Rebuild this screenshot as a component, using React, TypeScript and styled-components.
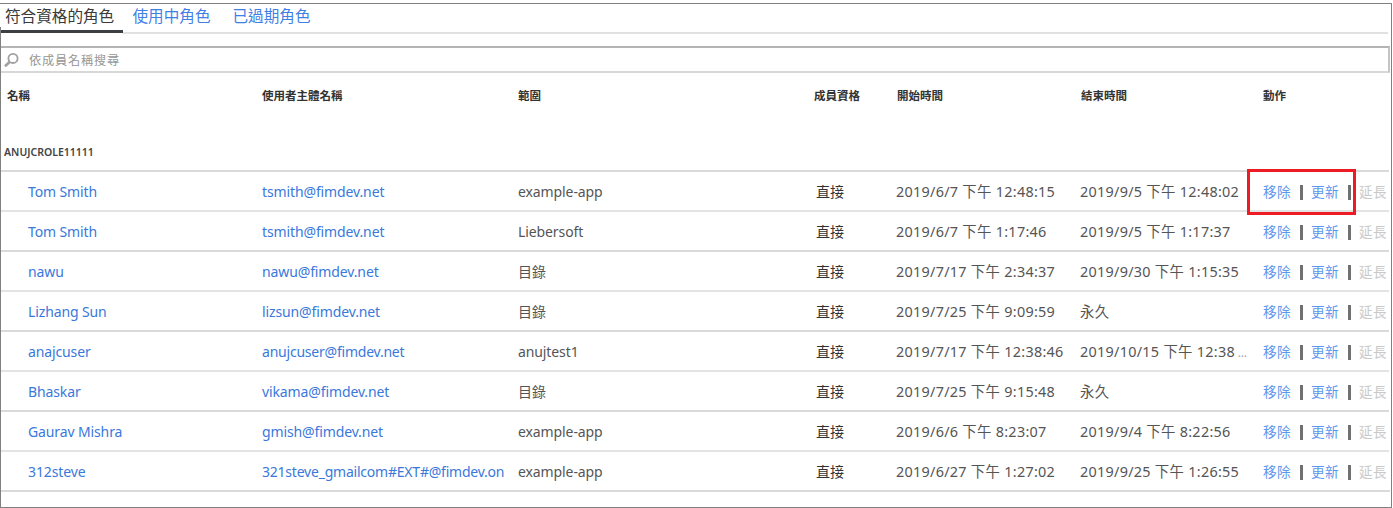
import React from "react";
import styled, { createGlobalStyle } from "styled-components";

const GlobalStyle = createGlobalStyle`
  *, *::before, *::after { box-sizing: border-box; }
  body {
    margin: 0;
    background: #fff;
    font-family: "Noto Sans", "Noto Sans CJK TC", sans-serif;
  }
`;

const Page = styled.main`
  width: 1393px;
  height: 508px;
  padding: 3px 1px 0 0;
  overflow: hidden;
  background: #fff;
`;

const Frame = styled.div`
  display: flex;
  flex-direction: column;
  height: 505px;
  border: 1px solid #808080;
  border-left: 0;
`;

const Tabs = styled.nav`
  display: flex;
  height: 28px;
  padding-right: 2px;
  align-items: stretch;
`;

const Tab = styled.a<{ $active?: boolean; $width: number; $indent: number }>`
  flex: none;
  width: ${(p) => p.$width}px;
  padding-left: ${(p) => p.$indent}px;
  font-size: 15.6px;
  line-height: 25px;
  white-space: nowrap;
  color: ${(p) => (p.$active ? "#3a3a3a" : "#3f80e4")};
  height: ${(p) => (p.$active ? 29 : 25)}px;
  border-bottom: ${(p) => (p.$active ? "3px solid #3d4042" : "0")};
`;

const TabRule = styled.div`
  flex: none;
  height: 2px;
  margin: 0 3px 0 123px;
  background: #e1e1e1;
`;

const Body = styled.section`
  display: flex;
  flex: 1;
  flex-direction: column;
  margin-top: -7px;
  padding-top: 19px;
  border-left: 1px solid #808080;
`;

const SearchBox = styled.label`
  display: flex;
  flex: none;
  align-items: center;
  height: 27px;
  width: 1389px;
  padding: 0 0 0 3px;
  gap: 10px;
  border: 2px solid #d8d8d8;
  border-top: 2px solid #b4b4b4;
  border-right-color: #c4c4c4;
  border-left: 0;
  color: #969696;
  font-size: 12.2px;
  letter-spacing: 0.8px;
`;

const Grid = styled.div`
  display: grid;
  grid-template-columns: 255px 256px 296px 83px 184px 182px 1fr;
  padding-left: 6px;
`;

const HeadRow = styled(Grid)`
  flex: none;
  height: 44px;
  align-items: center;
  font-size: 11.5px;
  font-weight: 600;
  color: #333;
`;

const GroupName = styled.h2`
  flex: none;
  height: 53px;
  margin: 0;
  padding: 25px 0 0 3px;
  font-size: 10.5px;
  font-weight: 600;
  line-height: 20px;
  color: #444;
`;

const Row = styled(Grid)<{ $heavy: boolean }>`
  flex: none;
  height: 40px;
  margin-right: 1px;
  padding-left: 27px;
  grid-template-columns: 234px 256px 298px 80px 184px 183px 1fr;
  align-items: center;
  border-top: 2px solid ${(p) => (p.$heavy ? "#dadada" : "#e3e3e3")};
  font-size: 14px;
  color: #555;
`;

const Rows = styled.div`
  border-bottom: 2px solid #dadada;
  margin-right: 1px;
`;

const Cell = styled.span`
  white-space: nowrap;
  letter-spacing: -0.1px;
`;

const LinkCell = styled(Cell)<{ $tight?: boolean }>`
  color: #3a78db;
  letter-spacing: ${(p) => (p.$tight ? -0.22 : -0.12)}px;
`;

const DateCell = styled(Cell)`
  padding-bottom: 2px;
  font-size: 14.4px;
  letter-spacing: 0.28px;
`;

const Membership = styled(Cell)`
  color: #333;
`;

const Ellipsis = styled.span`
  margin-left: 3px;
  font-size: 10px;
  font-weight: 600;
  color: #aaa;
`;

const Actions = styled.div`
  position: relative;
  display: flex;
  align-items: center;
  font-size: 13.6px;
  letter-spacing: 0.3px;
  white-space: nowrap;
`;

const Action = styled.a<{ $disabled?: boolean }>`
  width: 28px;
  color: ${(p) => (p.$disabled ? "#c9c9c9" : "#5d97ec")};
`;

const Divider = styled.i`
  width: 3px;
  height: 15px;
  margin: 3px 8px 0 9px;
  background: #707070;
`;

const Highlight = styled.div`
  position: absolute;
  left: -16px;
  top: 50%;
  width: 109px;
  height: 46px;
  margin-top: -22px;
  border: 3px solid #ed1c24;
`;

type Entry = {
  name: string;
  upn: string;
  scope: string;
  start: string;
  end: string;
  truncated?: boolean;
};

const entries: Entry[] = [
  { name: "Tom Smith", upn: "tsmith@fimdev.net", scope: "example-app", start: "2019/6/7 下午 12:48:15", end: "2019/9/5 下午 12:48:02" },
  { name: "Tom Smith", upn: "tsmith@fimdev.net", scope: "Liebersoft", start: "2019/6/7 下午 1:17:46", end: "2019/9/5 下午 1:17:37" },
  { name: "nawu", upn: "nawu@fimdev.net", scope: "目錄", start: "2019/7/17 下午 2:34:37", end: "2019/9/30 下午 1:15:35" },
  { name: "Lizhang Sun", upn: "lizsun@fimdev.net", scope: "目錄", start: "2019/7/25 下午 9:09:59", end: "永久" },
  { name: "anajcuser", upn: "anujcuser@fimdev.net", scope: "anujtest1", start: "2019/7/17 下午 12:38:46", end: "2019/10/15 下午 12:38", truncated: true },
  { name: "Bhaskar", upn: "vikama@fimdev.net", scope: "目錄", start: "2019/7/25 下午 9:15:48", end: "永久" },
  { name: "Gaurav Mishra", upn: "gmish@fimdev.net", scope: "example-app", start: "2019/6/6 下午 8:23:07", end: "2019/9/4 下午 8:22:56" },
  { name: "312steve", upn: "321steve_gmailcom#EXT#@fimdev.on", scope: "example-app", start: "2019/6/27 下午 1:27:02", end: "2019/9/25 下午 1:26:55" },
];

const headings = ["名稱", "使用者主體名稱", "範圍", "成員資格", "開始時間", "結束時間", "動作"];

const SearchIcon = () => (
  <svg width="15" height="17" viewBox="0 0 15 17" fill="none" stroke="#a0a0a0">
    <circle cx="9" cy="7.4" r="4.6" strokeWidth="1.8" />
    <path d="M5.6 11 1 15.2" strokeWidth="2.6" />
  </svg>
);

export default function App() {
  return (
    <Page>
      <GlobalStyle />
      <Frame>
        <Tabs>
          <Tab $active $width={123} $indent={5}>符合資格的角色</Tab>
          <Tab $width={100} $indent={9.5}>使用中角色</Tab>
          <Tab $width={100} $indent={9.5}>已過期角色</Tab>
        </Tabs>
        <TabRule />
        <Body>
          <SearchBox>
            <SearchIcon />
            依成員名稱搜尋
          </SearchBox>
          <HeadRow>
            {headings.map((h) => (
              <span key={h}>{h}</span>
            ))}
          </HeadRow>
          <GroupName>ANUJCROLE11111</GroupName>
          <Rows>
            {entries.map((e, i) => (
              <Row key={i} $heavy={i % 2 === 0}>
                <LinkCell>{e.name}</LinkCell>
                <LinkCell $tight={e.upn.length > 18}>{e.upn}</LinkCell>
                <Cell>{e.scope}</Cell>
                <Membership>直接</Membership>
                <DateCell>{e.start}</DateCell>
                <DateCell>
                  {e.end}
                  {e.truncated && <Ellipsis>...</Ellipsis>}
                </DateCell>
                <Actions>
                  <Action>移除</Action>
                  <Divider />
                  <Action>更新</Action>
                  <Divider />
                  <Action $disabled>延長</Action>
                  {i === 0 && <Highlight />}
                </Actions>
              </Row>
            ))}
          </Rows>
        </Body>
      </Frame>
    </Page>
  );
}
